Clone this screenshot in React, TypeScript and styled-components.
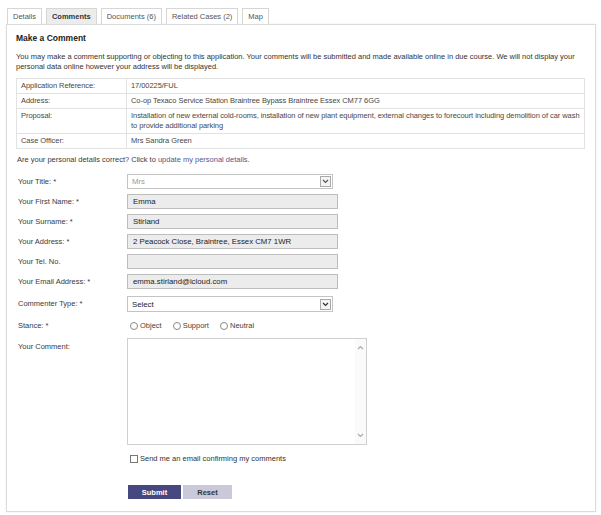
import React from "react";
import styled, { createGlobalStyle } from "styled-components";

const Global = createGlobalStyle`
  html, body { margin: 0; padding: 0; background: #fff; }
  body { font-family: "Liberation Sans", Arial, sans-serif; color: #3a3a3a; font-size: 7.5px; }
  * { box-sizing: border-box; }
`;

const Page = styled.div`
  padding: 8px 5px 4px 6px;
  width: 601px;
`;

const TabBar = styled.div`
  display: flex;
  gap: 4px;
  padding-left: 1px;
  height: 16px;
`;

const Tab = styled.div<{ $active?: boolean }>`
  height: 16px;
  padding: 0 5px;
  display: flex;
  align-items: center;
  border: 1px solid #d6d6d6;
  border-bottom: none;
  background: ${(p) => (p.$active ? "#ececec" : "#fff")};
  font-weight: ${(p) => (p.$active ? "bold" : "normal")};
  color: ${(p) => (p.$active ? "#333" : "#555")};
  font-size: 7.5px;
`;

const Panel = styled.div`
  border: 1px solid #dcdcdc;
  box-shadow: 0 0 2px rgba(0, 0, 0, 0.08);
  width: 590px;
  padding: 8px 10px 12px 9px;
  min-height: 486px;
`;

const Heading = styled.h2`
  margin: 0 0 8px 0;
  font-size: 8.5px;
  line-height: 11px;
  font-weight: bold;
  color: #222;
`;

const Intro = styled.p`
  margin: 0 0 6px 0;
  line-height: 10px;
  color: #333;
`;

const InfoTable = styled.table`
  width: 569px;
  border-collapse: collapse;
  margin-bottom: 6px;
  td {
    border: 1px solid #e2e2e2;
    padding: 2px 1px 2px 4px;
    line-height: 10px;
    vertical-align: top;
    color: #484848;
    letter-spacing: -0.06px;
  }
  td:first-child {
    width: 110px;
  }
`;

const Note = styled.div`
  line-height: 10px;
  margin-bottom: 9px;
  padding-left: 1px;
`;

const Link = styled.a`
  color: #55558f;
  text-decoration: none;
`;

const Form = styled.div`
  padding-left: 2px;
  display: flex;
  flex-direction: column;
`;

const Row = styled.div<{ $h?: number }>`
  display: flex;
  align-items: flex-start;
  height: ${(p) => p.$h ?? 20}px;
`;

const Label = styled.div<{ $top?: number }>`
  width: 109px;
  flex: none;
  line-height: 15px;
  padding-top: ${(p) => p.$top ?? 0}px;
  color: #3a3a3a;
`;

const TextInput = styled.div<{ $w?: number }>`
  width: ${(p) => p.$w ?? 211}px;
  height: 15px;
  border: 1px solid #bdbdbd;
  background: #ececec;
  padding: 0 5px;
  line-height: 13px;
  font-size: 7.8px;
  color: #222;
`;

const Select = styled.div<{ $disabled?: boolean }>`
  width: 206px;
  height: ${(p) => (p.$disabled ? 15 : 16)}px;
  border: 1px solid #c4c4c4;
  background: #fff;
  display: flex;
  align-items: center;
  justify-content: space-between;
  padding: 0 1px 0 4px;
  font-size: 7.8px;
  color: ${(p) => (p.$disabled ? "#9a9a9a" : "#222")};
`;

const Arrow = styled.span`
  width: 11px;
  height: 11px;
  border: 1px solid #a9a9a9;
  background: #f4f4f4;
  display: flex;
  align-items: center;
  justify-content: center;
`;

const Radios = styled.div`
  display: flex;
  gap: 11px;
  padding-left: 3px;
  padding-top: 3px;
`;

const RadioItem = styled.label`
  display: flex;
  align-items: center;
  gap: 2px;
  line-height: 10px;
  color: #444;
`;

const RadioDot = styled.span`
  width: 8px;
  height: 8px;
  border-radius: 50%;
  border: 1px solid #8a8a8a;
  background: #fff;
`;

const TextArea = styled.div`
  width: 240px;
  height: 107px;
  border: 1px solid #cfcfcf;
  display: flex;
  justify-content: flex-end;
  margin-top: -1px;
`;

const ScrollTrack = styled.div`
  width: 11px;
  height: 100%;
  background: #fafafa;
  display: flex;
  flex-direction: column;
  justify-content: space-between;
  align-items: center;
  padding: 6px 0 6px 0;
`;

const CheckRow = styled.label`
  display: flex;
  align-items: center;
  gap: 2px;
  margin: 9px 0 0 112px;
  line-height: 10px;
  color: #333;
`;

const CheckBox = styled.span`
  width: 8px;
  height: 8px;
  border: 1px solid #777;
  background: #fff;
`;

const Buttons = styled.div`
  display: flex;
  gap: 2px;
  margin: 21px 0 0 110px;
`;

const Button = styled.button<{ $primary?: boolean }>`
  height: 14px;
  width: ${(p) => (p.$primary ? 53 : 49)}px;
  border: none;
  padding: 0;
  font-family: "Liberation Sans", Arial, sans-serif;
  font-size: 7.5px;
  font-weight: bold;
  background: ${(p) => (p.$primary ? "#46487f" : "#c9c9da")};
  color: ${(p) => (p.$primary ? "#fff" : "#333")};
`;

const Chevron = ({ up, color = "#555" }: { up?: boolean; color?: string }) => (
  <svg width="7" height="5" viewBox="0 0 7 5">
    <path
      d={up ? "M1 4 L3.5 1.5 L6 4" : "M1 1 L3.5 3.5 L6 1"}
      fill="none"
      stroke={color}
      strokeWidth="1.2"
    />
  </svg>
);

export default function App() {
  return (
    <>
      <Global />
      <Page>
        <TabBar>
          <Tab>Details</Tab>
          <Tab $active>Comments</Tab>
          <Tab>Documents (6)</Tab>
          <Tab>Related Cases (2)</Tab>
          <Tab>Map</Tab>
        </TabBar>
        <Panel>
          <Heading>Make a Comment</Heading>
          <Intro>
            You may make a comment supporting or objecting to this application. Your comments will be submitted and
            made available online in due course. We will not display your personal data online however your address
            will be displayed.
          </Intro>
          <InfoTable>
            <tbody>
              <tr>
                <td>Application Reference:</td>
                <td>17/00225/FUL</td>
              </tr>
              <tr>
                <td>Address:</td>
                <td>Co-op Texaco Service Station Braintree Bypass Braintree Essex CM77 6GG</td>
              </tr>
              <tr>
                <td>Proposal:</td>
                <td>
                  Installation of new external cold-rooms, installation of new plant equipment, external changes to
                  forecourt including demolition of car wash to provide additional parking
                </td>
              </tr>
              <tr>
                <td>Case Officer:</td>
                <td>Mrs Sandra Green</td>
              </tr>
            </tbody>
          </InfoTable>
          <Note>
            Are your personal details correct? Click to <Link href="#">update my personal details</Link>.
          </Note>
          <Form>
            <Row>
              <Label>Your Title: *</Label>
              <Select $disabled>
                Mrs
                <Arrow>
                  <Chevron />
                </Arrow>
              </Select>
            </Row>
            <Row>
              <Label>Your First Name: *</Label>
              <TextInput>Emma</TextInput>
            </Row>
            <Row>
              <Label>Your Surname: *</Label>
              <TextInput>Stirland</TextInput>
            </Row>
            <Row>
              <Label>Your Address: *</Label>
              <TextInput>2 Peacock Close, Braintree, Essex CM7 1WR</TextInput>
            </Row>
            <Row>
              <Label>Your Tel. No.</Label>
              <TextInput />
            </Row>
            <Row $h={22}>
              <Label>Your Email Address: *</Label>
              <TextInput>emma.stirland@icloud.com</TextInput>
            </Row>
            <Row $h={22}>
              <Label>Commenter Type: *</Label>
              <Select>
                Select
                <Arrow>
                  <Chevron color="#333" />
                </Arrow>
              </Select>
            </Row>
            <Row $h={21}>
              <Label>Stance: *</Label>
              <Radios>
                <RadioItem>
                  <RadioDot />
                  Object
                </RadioItem>
                <RadioItem>
                  <RadioDot />
                  Support
                </RadioItem>
                <RadioItem>
                  <RadioDot />
                  Neutral
                </RadioItem>
              </Radios>
            </Row>
            <Row $h={106}>
              <Label $top={-1}>Your Comment:</Label>
              <TextArea>
                <ScrollTrack>
                  <Chevron up color="#aaa" />
                  <Chevron color="#aaa" />
                </ScrollTrack>
              </TextArea>
            </Row>
            <CheckRow>
              <CheckBox />
              Send me an email confirming my comments
            </CheckRow>
            <Buttons>
              <Button $primary>Submit</Button>
              <Button>Reset</Button>
            </Buttons>
          </Form>
        </Panel>
      </Page>
    </>
  );
}
